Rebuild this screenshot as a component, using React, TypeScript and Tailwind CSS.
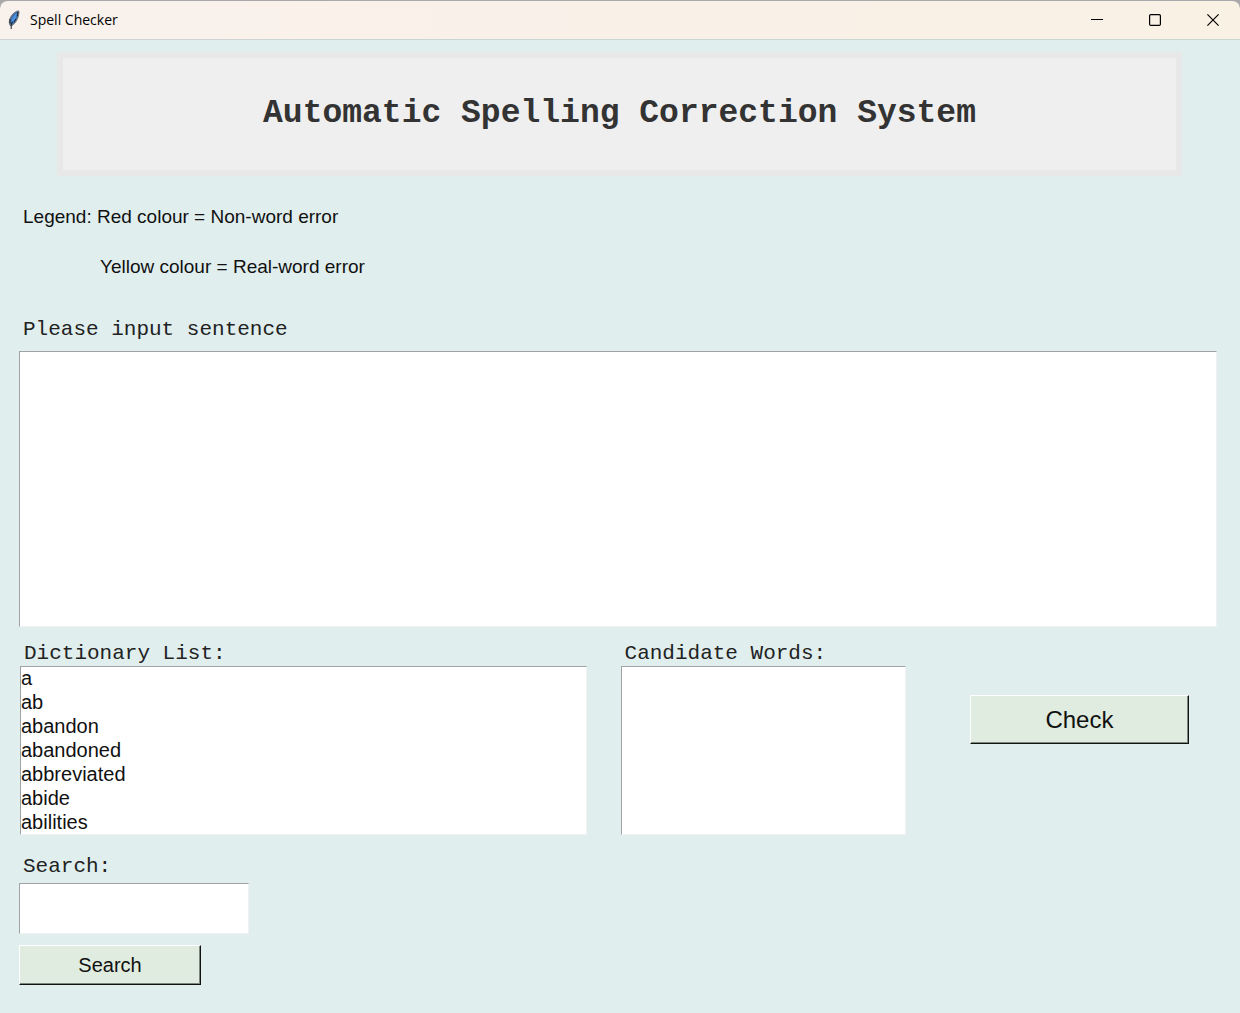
import React, { useState } from "react";

const words = ["a", "ab", "abandon", "abandoned", "abbreviated", "abide", "abilities"];

const sans = "font-['Liberation_Sans',Arial,sans-serif]";
const mono = "block pl-1 font-['Liberation_Mono','Courier_New',monospace] text-[21px] leading-6 text-[#222]";
const sunken =
  "block w-full appearance-none rounded-none border border-t-[#a0a3a3] border-l-[#a0a3a3] border-r-[#f0f2f2] border-b-[#f0f2f2] bg-white outline-none";
const raised =
  "border border-t-white border-l-white border-r-[#101410] border-b-[#101410] bg-[#dfecdf] text-[#111] shadow-[inset_-1px_-1px_0_#7d877d]";

function Feather() {
  return (
    <svg width="12" height="20" viewBox="0 0 12 20" aria-hidden="true">
      <path d="M10.500.8C7 1.500 3.600 4.500 2 8.500C1 11.200 1 13.500 2.300 15.500L3.600 15.800C7.500 13.500 10 9 10.700 4.500C11 2.800 11 1.500 10.500.8Z" fill="#3f6fa8" stroke="#77777a" strokeWidth="1" />
      <path d="M9.300 2.800C6.500 4.500 4 8 3.200 12L5.200 12C7.800 9.500 9.200 6 9.300 2.800Z" fill="#4a92e4" />
      <path d="M10 2L9 6.500M8 8.500L6 12M2 9V13.500M3.200 19V15L4.500 11.500" fill="none" stroke="#1b2027" strokeWidth="1" />
    </svg>
  );
}

function TitleBar() {
  const control = "flex h-full w-12 items-center justify-center";
  return (
    <header className="flex h-10 items-center rounded-t-lg border-t border-b border-t-[#aaa8ab] border-b-[#cbd4d0] bg-gradient-to-r from-[#f9f1ec] to-[#f9f1e4] pr-[3px] pl-2">
      <Feather />
      <h2 className="ml-[10px] flex-1 font-['Open_Sans','Segoe_UI',sans-serif] text-[14px] leading-5 text-black">
        Spell Checker
      </h2>
      <div className="flex h-full gap-[10px]">
        <button type="button" aria-label="Minimize" className={control}>
          <svg width="12" height="12" viewBox="0 0 12 12" stroke="#000" fill="none">
            <path d="M0 5.500H12" />
          </svg>
        </button>
        <button type="button" aria-label="Maximize" className={control}>
          <svg width="12" height="12" viewBox="0 0 12 12" stroke="#000" fill="none">
            <rect x="0.600" y="0.600" width="10.800" height="10.800" rx="1.200" strokeWidth="1.200" />
          </svg>
        </button>
        <button type="button" aria-label="Close" className={control}>
          <svg width="12" height="12" viewBox="0 0 12 12" stroke="#000" fill="none">
            <path d="M0.400 0.400L11.600 11.600M11.600 0.400L0.400 11.600" strokeWidth="1.200" />
          </svg>
        </button>
      </div>
    </header>
  );
}

export default function App() {
  const [sentence, setSentence] = useState("");
  const [query, setQuery] = useState("");

  return (
    <div className={"min-h-screen bg-[#aaa8ab] " + sans}>
      <TitleBar />
      <main className="min-h-[calc(100vh-40px)] bg-[#e0eeee] pt-3 pr-[23px] pb-7 pl-[19px]">
        <h1 className="mr-[35px] ml-[38px] border-[6px] border-[#e8e8e8] bg-[#efefef] py-9 text-center font-['Liberation_Mono','Courier_New',monospace] text-[33px] leading-10 font-bold text-[#333]">
          Automatic Spelling Correction System
        </h1>

        <section className="mt-7 pl-1 text-[19px] leading-[26px] text-[#111]">
          <p>Legend: Red colour = Non-word error</p>
          <p className="mt-6 pl-[77px]">Yellow colour = Real-word error</p>
        </section>

        <div className="mt-[38px]">
          <label htmlFor="sentence" className={mono}>Please input sentence</label>
          <textarea
            id="sentence"
            value={sentence}
            onChange={(e) => setSentence(e.target.value)}
            className={sunken + " mt-[9px] h-[276px] resize-none p-1 text-[20px]"}
          />
        </div>

        <div className="mt-[15px] flex items-start pr-7 pl-px">
          <div className="flex-[566_1_0%]">
            <label htmlFor="dictionary" className={mono}>Dictionary List:</label>
            <select id="dictionary" size={7} className={sunken + " h-[169px] overflow-hidden p-0 text-[20px] text-[#111]"}>
              {words.map((w) => (
                <option key={w} className="h-6 min-h-6 p-0 leading-6">{w}</option>
              ))}
            </select>
          </div>
          <div className="ml-[34px] flex-[285_1_0%]">
            <label htmlFor="candidates" className={mono}>Candidate Words:</label>
            <select id="candidates" size={7} className={sunken + " h-[169px] overflow-hidden p-0 text-[20px]"} />
          </div>
          <div className="mt-[53px] ml-16 flex-[219_1_0%]">
            <button type="button" className={raised + " block h-[49px] w-full text-[24px] leading-7"}>
              Check
            </button>
          </div>
        </div>

        <form onSubmit={(e) => e.preventDefault()} className="mt-5">
          <label htmlFor="search" className={mono}>Search:</label>
          <input
            id="search"
            type="text"
            value={query}
            onChange={(e) => setQuery(e.target.value)}
            className={sunken + " mt-1 h-[51px] max-w-[230px] px-1 text-[20px]"}
          />
          <button type="submit" className={raised + " mt-[11px] block h-10 w-[182px] text-[20px] leading-6"}>
            Search
          </button>
        </form>
      </main>
    </div>
  );
}
